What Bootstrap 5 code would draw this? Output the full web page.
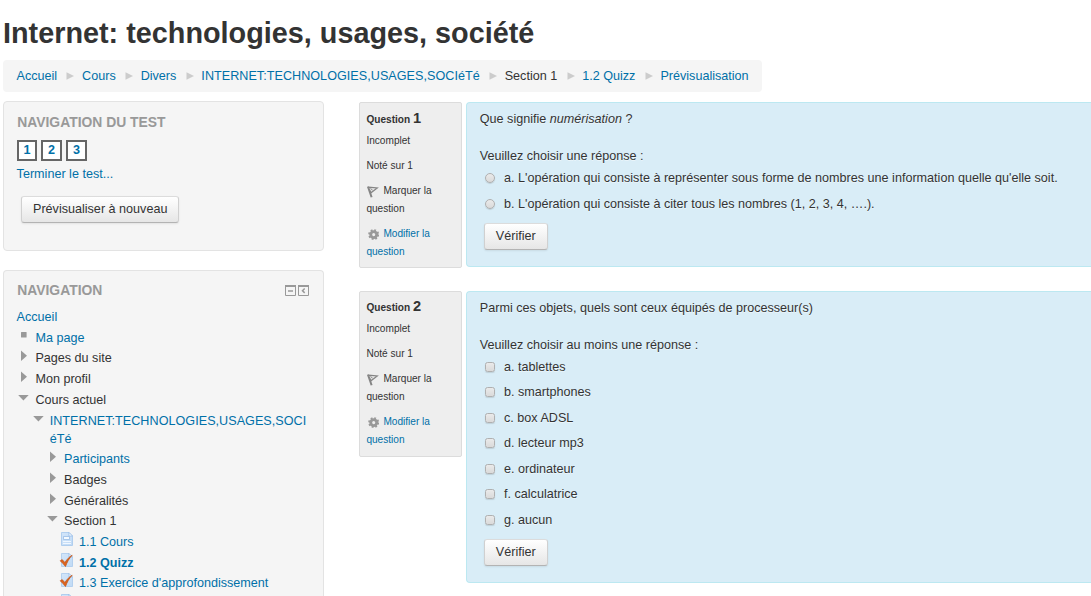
<!DOCTYPE html>
<html lang="fr">
<head>
<meta charset="utf-8">
<title>Internet: technologies, usages, société</title>
<meta name="viewport" content="width=device-width, initial-scale=1">
<link href="https://cdn.jsdelivr.net/npm/bootstrap@5.3.0/dist/css/bootstrap.min.css" rel="stylesheet">
<style>
body{font-family:"Liberation Sans",Arial,sans-serif;font-size:12.6px;line-height:18px;color:#333;background:#fff;overflow:hidden;height:596px}
a{color:#0070a8;text-decoration:none}
.page-title{font-size:28.8px;line-height:36px;font-weight:700;margin:15px 0 9px;padding-left:3px;white-space:nowrap}
.crumbs{width:759px;height:32px;margin-left:3px;padding:0 0 0 13.5px;background:#f5f5f5;border-radius:4px;white-space:nowrap}
.crumbs .sep{flex:none;width:8px;height:8px;margin:0 7.7px 0 9.3px;fill:#ccc}
.course{letter-spacing:.035px}
.layout{padding:9px 0 0 3px;height:504px;overflow:hidden}
.side{width:321px}
.block-box{background:#f5f5f5;border:1px solid #e3e3e3;border-radius:4px;padding:11px 12.6px 0}
.block-test{height:150px;margin-bottom:19px}
.block-nav{height:326px;border-bottom:0;border-radius:4px 4px 0 0;overflow:hidden;padding-top:10px}
.block-nav .head{margin-bottom:9px}
.block-box h2{font-size:13.9px;line-height:18px;font-weight:700;color:#999;margin:0;padding-left:.6px;text-transform:uppercase}
.qnums{gap:4px;margin:9px 0 4px .4px}
.qnum{height:21px;border:2px solid #666;background:#fff;font-weight:700;line-height:17px;text-align:center;width:21px}
.qnum:first-child{width:20px}
.btn-grey{height:27px;padding:0 11px 1px;font-size:12.6px;line-height:24px;color:#333;border:1px solid #ccc;border-color:#dcdcdc #d0d0d0 #b3b3b3;border-radius:3px;background:linear-gradient(#fff,#e6e6e6);box-shadow:0 1px 2px rgba(0,0,0,.08)}
.btn-again{margin:13px 0 0 4.4px}
.btn-check-answer{margin:6.500px 0 0 4px}
.tree{margin:.1px 0 0;padding:0;list-style:none}
.tree li{display:flex;padding-top:2.7px;min-height:20.7px}
.tree svg{flex:none;margin-right:5px}
.tree .lv1{padding-left:.8px}.tree .lv2{padding-left:15.1px}.tree .lv3{padding-left:29.400px}.tree .lv4{padding-left:42.400px}
.tree .arrow{width:13px;height:13px;fill:#999}
.tree .doc{width:15px;height:15px;margin:-1px 5px 0 0}
.main{margin-left:35px;padding-top:1px;width:732px}
.question{margin-bottom:23px}
.info{width:103px;height:166px;background:#eee;border:1px solid #dcdcdc;border-radius:2px;padding:5.500px 6.400px;font-size:10.1px;line-height:18px}
.info-next{padding-top:4.500px}
.info h3{font-size:10.1px;line-height:18px;margin:0 0 3px;font-weight:700}
.info h3 span{font-size:14.6px}
.info div{margin-bottom:7.1px}
.info svg{width:13px;height:13px;vertical-align:-4.5px;margin-right:4px}
.formulation{margin-left:4px;flex:1;background:#d9edf7;border:1px solid #bce8f1;border-right:0;border-radius:4px 0 0 4px;padding:7px 12.800px 0;text-shadow:0 1px 0 rgba(255,255,255,.5)}
.prompt{margin-top:19px}
.f1{height:165px}.f2{height:292px}
.f1 .answer{height:26px}.f1 .answer:first-of-type{height:25.500px}
.f1 .btn-check-answer{margin-top:6px}
.answer{height:25.5px;padding-left:5px;gap:9.200px}
.answer input{appearance:none;width:10px;height:10px;margin:0;border:1px solid #b0b0b0;border-radius:2.500px;background:linear-gradient(#eaeaea,#dadada);box-shadow:0 1px 1px rgba(0,0,0,.12)}
.answer input[type=radio]{border-radius:50%}
</style>
<script src="https://cdn.jsdelivr.net/npm/bootstrap@5.3.0/dist/js/bootstrap.bundle.min.js"></script>
</head>
<body>
<svg width="0" height="0" class="position-absolute">
<defs>
<linearGradient id="paper" x1="0" y1="0" x2="1" y2="1"><stop offset="0" stop-color="#d3e6fa"/><stop offset="1" stop-color="#c0daf5"/></linearGradient>
<symbol id="sep" viewBox="0 0 8 8"><path d="M.5 .3 8 4 .5 7.7z"/></symbol>
<symbol id="right" viewBox="0 0 13 13"><path d="M4 1.5 10 6.700 4 12z"/></symbol>
<symbol id="down" viewBox="0 0 13 13"><path d="M1.2 4h10.5L6.400 9.500z"/></symbol>
<symbol id="square" viewBox="0 0 13 13"><rect x="4" y="3" width="5.6" height="5.6" rx=".6"/></symbol>
<symbol id="page" viewBox="0 0 15 15"><path d="M2.500 .5h7.500l3.500 3.500v9.500h-11z" fill="url(#paper)" stroke="#a5c6ec" stroke-width=".8"/><path d="M10 .5v3.500h3.500z" fill="#fff" stroke="#8fb7e6" stroke-width=".7"/><path d="M4.500 4.500h6v3h-6z" fill="#f4faff" stroke="#8fb5e3" stroke-width=".7"/><path d="M4 9.500h8M4 11.500h8" stroke="#f0f7ff"/></symbol>
<symbol id="quiz" viewBox="0 0 15 15"><path d="M2.500.5h7.500l3.500 3.500v9.500h-11z" fill="url(#paper)" stroke="#a9c9ec" stroke-width=".8"/><path d="M10 .5v3.500h3.500z" fill="#edf6ff" stroke="#8fb7e6" stroke-width=".6"/><path d="M1.200 7.800 3.200 6.600 5.900 9.500C7.900 6.300 10.400 3.700 13.200 2.200 10.200 5.300 8 9.200 6.500 13.500 4.900 11.500 3 9.500 1.200 7.800z" fill="#dd6420" stroke="#c25515" stroke-width=".7"/></symbol>
<symbol id="flag" viewBox="0 0 13 13"><path d="M2 1.800 5.600 12.300" stroke="#858585" stroke-width="2"/><path d="M2.400 2.200 11.300 2.900 5 7.800z" fill="#e5e5e5" stroke="#858585" stroke-width="1.200"/><path d="M4.500 3.500 6.500 5" stroke="#858585"/></symbol>
<symbol id="gear" viewBox="0 0 13 13"><g fill="none" stroke="#999"><circle cx="7.700" cy="6.600" r="3" stroke-width="2.900"/><circle cx="7.700" cy="6.600" r="4.500" stroke-width="2" stroke-dasharray="1.767 1.767"/></g></symbol>
</defs>
</svg>

<h1 class="page-title">Internet: technologies, usages, société</h1>
<nav class="crumbs d-flex align-items-center">
<a href="#">Accueil</a><svg class="sep"><use href="#sep"/></svg><a href="#">Cours</a><svg class="sep"><use href="#sep"/></svg><a href="#">Divers</a><svg class="sep"><use href="#sep"/></svg><a class="course" href="#">INTERNET:TECHNOLOGIES,USAGES,SOCIéTé</a><svg class="sep"><use href="#sep"/></svg><span>Section 1</span><svg class="sep"><use href="#sep"/></svg><a href="#">1.2 Quizz</a><svg class="sep"><use href="#sep"/></svg><a href="#">Prévisualisation</a>
</nav>

<div class="layout d-flex align-items-start">
<aside class="side flex-shrink-0">
<section class="block-box block-test">
<h2>Navigation du test</h2>
<div class="qnums d-flex"><a class="qnum" href="#">1</a><a class="qnum" href="#">2</a><a class="qnum" href="#">3</a></div>
<a href="#" class="d-block">Terminer le test...</a>
<button class="btn btn-grey btn-again" type="button">Prévisualiser à nouveau</button>
</section>
<section class="block-box block-nav">
<div class="head d-flex justify-content-between align-items-center"><h2>Navigation</h2>
<svg width="25" height="12" viewBox="0 0 25 12" fill="none" stroke="#999"><path d="M.5 1v10.500h10V1M13.500 1v10.500h10V1"/><path d="M0 2h11M13 2h11" stroke-width="2"/><path d="M3 7h5" stroke-width="1.500"/><path d="M19.700 4.500 17.500 6.700l2.200 2.200" stroke-width="1.500"/></svg></div>
<a href="#" class="d-block">Accueil</a>
<ul class="tree">
<li class="lv1"><svg class="arrow"><use href="#square"/></svg><a href="#">Ma page</a></li>
<li class="lv1"><svg class="arrow"><use href="#right"/></svg><span>Pages du site</span></li>
<li class="lv1"><svg class="arrow"><use href="#right"/></svg><span>Mon profil</span></li>
<li class="lv1"><svg class="arrow"><use href="#down"/></svg><span>Cours actuel</span></li>
<li class="lv2"><svg class="arrow"><use href="#down"/></svg><a class="course" href="#">INTERNET:TECHNOLOGIES,USAGES,SOCI<br>éTé</a></li>
<li class="lv3"><svg class="arrow"><use href="#right"/></svg><a href="#">Participants</a></li>
<li class="lv3"><svg class="arrow"><use href="#right"/></svg><span>Badges</span></li>
<li class="lv3"><svg class="arrow"><use href="#right"/></svg><span>Généralités</span></li>
<li class="lv3"><svg class="arrow"><use href="#down"/></svg><span>Section 1</span></li>
<li class="lv4"><svg class="doc"><use href="#page"/></svg><a href="#">1.1 Cours</a></li>
<li class="lv4"><svg class="doc"><use href="#quiz"/></svg><a href="#" class="fw-bold">1.2 Quizz</a></li>
<li class="lv4"><svg class="doc"><use href="#quiz"/></svg><a href="#">1.3 Exercice d'approfondissement</a></li>
<li class="lv4"><svg class="doc"><use href="#page"/></svg></li>
</ul>
</section>
</aside>

<main class="main flex-shrink-0">
<div class="question d-flex align-items-start">
<div class="info"><h3>Question <span>1</span></h3><div>Incomplet</div><div>Noté sur 1</div><div><svg><use href="#flag"/></svg>Marquer la<br>question</div><a href="#"><svg><use href="#gear"/></svg>Modifier la<br>question</a></div>
<div class="formulation f1"><div>Que signifie <em>numérisation</em> ?</div><div class="prompt">Veuillez choisir une réponse :</div>
<label class="answer d-flex align-items-center"><input type="radio" name="q1">a. L'opération qui consiste à représenter sous forme de nombres une information quelle qu'elle soit.</label>
<label class="answer d-flex align-items-center"><input type="radio" name="q1">b. L'opération qui consiste à citer tous les nombres (1, 2, 3, 4, ….).</label>
<button class="btn btn-grey btn-check-answer" type="button">Vérifier</button></div>
</div>
<div class="d-flex align-items-start">
<div class="info info-next"><h3>Question <span>2</span></h3><div>Incomplet</div><div>Noté sur 1</div><div><svg><use href="#flag"/></svg>Marquer la<br>question</div><a href="#"><svg><use href="#gear"/></svg>Modifier la<br>question</a></div>
<div class="formulation f2"><div>Parmi ces objets, quels sont ceux équipés de processeur(s)</div><div class="prompt">Veuillez choisir au moins une réponse :</div>
<label class="answer d-flex align-items-center"><input type="checkbox">a. tablettes</label>
<label class="answer d-flex align-items-center"><input type="checkbox">b. smartphones</label>
<label class="answer d-flex align-items-center"><input type="checkbox">c. box ADSL</label>
<label class="answer d-flex align-items-center"><input type="checkbox">d. lecteur mp3</label>
<label class="answer d-flex align-items-center"><input type="checkbox">e. ordinateur</label>
<label class="answer d-flex align-items-center"><input type="checkbox">f. calculatrice</label>
<label class="answer d-flex align-items-center"><input type="checkbox">g. aucun</label>
<button class="btn btn-grey btn-check-answer" type="button">Vérifier</button></div>
</div>
</main>
</div>
</body>
</html>
